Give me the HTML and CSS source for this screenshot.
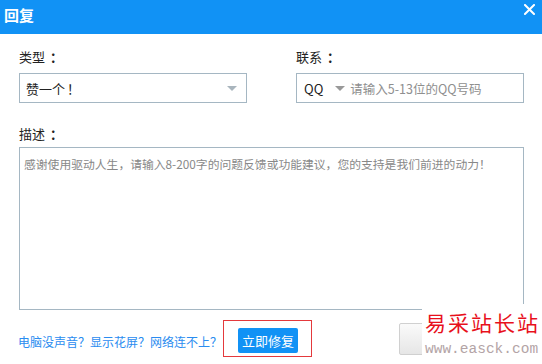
FILE: index.html
```html
<!DOCTYPE html>
<html lang="zh-CN">
<head>
<meta charset="utf-8">
<title>回复</title>
<link rel="stylesheet" href="styles.css">
</head>
<body>
<div class="dialog">
  <div class="titlebar">
    <span class="title">回复</span>
    <svg class="close" width="11" height="11" viewBox="0 0 11 11"><path d="M1 1L10 10M10 1L1 10" stroke="#fff" stroke-width="2" stroke-linecap="square"/></svg>
  </div>
  <div class="content">
    <div class="row">
      <div class="field">
        <div class="label">类型<span class="colon">：</span></div>
        <div class="box select">
          <span class="value">赞一个<span class="excl">！</span></span>
          <span class="tri tri-light"></span>
        </div>
      </div>
      <div class="field">
        <div class="label">联系<span class="colon">：</span></div>
        <div class="box contact">
          <span class="value">QQ</span>
          <span class="tri tri-gray"></span>
          <span class="ph">请输入5-13位的QQ号码</span>
        </div>
      </div>
    </div>
    <div class="label desc-label">描述<span class="colon">：</span></div>
    <div class="textarea">感谢使用驱动人生，请输入8-200字的问题反馈或功能建议，您的支持是我们前进的动力！</div>
    <div class="footer">
      <a class="links">电脑没声音？显示花屏？网络连不上？</a>
      <div class="highlight"><button class="btn-primary">立即修复</button></div>
      <span class="btn-gray"></span>
    </div>
  </div>
  <div class="watermark">
    <div class="wm-cn">易采站长站</div>
    <div class="wm-url">www.easck.com</div>
  </div>
</div>
</body>
</html>
```

FILE: styles.css
```css
* { box-sizing: border-box; }
html, body { margin: 0; padding: 0; background: #fff; }
body {
  font-family: "Noto Sans CJK SC", "Noto Sans", sans-serif;
  color: #222;
  width: 542px;
  height: 364px;
  overflow: hidden;
}
.dialog { position: relative; width: 542px; height: 364px; }
.titlebar {
  height: 34px;
  background: #1192f5;
  display: flex;
  justify-content: space-between;
  align-items: flex-start;
  padding: 0 7px 0 4px;
}
.title {
  color: #fff;
  font-size: 15px;
  font-weight: bold;
  line-height: 29px;
}
.close { margin-top: 4px; }
.content { padding: 13px 18px 0 19px; }
.row {
  display: grid;
  grid-template-columns: 228px 228px;
  column-gap: 49px;
}
.label {
  font-size: 13px;
  line-height: 20px;
  margin-bottom: 6px;
  color: #222;
}
.colon {
  font-weight: bold;
  margin-left: 5px;
}
.box {
  height: 30px;
  border: 1px solid #a5b7c3;
  display: flex;
  align-items: center;
  font-size: 13px;
}
.select { padding: 0 6px 0 6px; justify-content: space-between; }
.contact { padding: 0 7px; }
.value { color: #222; }
.excl { margin-left: 2px; }
.tri {
  width: 0; height: 0;
  border-left: 5px solid transparent;
  border-right: 5px solid transparent;
  border-top: 5px solid #a9b5bd;
}
.tri-light { margin-right: 3px; }
.tri-gray { border-top-color: #999; margin-left: 12px; margin-right: 5px; }
.ph { color: #8f8f8f; font-size: 12.5px; }
.desc-label { margin-top: 21px; margin-bottom: 3px; }
.textarea {
  height: 163px;
  border: 1px solid #a5b7c3;
  padding: 6px 4px;
  font-size: 11.8px;
  line-height: 20px;
  color: #888;
  white-space: nowrap;
}
.footer {
  display: flex;
  align-items: center;
  margin-top: 10px;
}
.links {
  color: #2a8cf0;
  font-size: 12px;
  width: 205px;
  flex: none;
  margin-left: -1px;
  margin-top: 5px;
  white-space: nowrap;
  overflow: hidden;
}
.highlight {
  flex: none;
  border: 1px solid #e4393c;
  padding: 7px 13px 3px 14px;
}
.btn-primary {
  display: block;
  width: 60px;
  height: 25px;
  border: 0;
  border-radius: 2px;
  background: #1192f5;
  color: #fff;
  font-family: inherit;
  font-size: 13px;
  padding: 0;
  line-height: 25px;
}
.btn-gray {
  flex: none;
  display: block;
  margin-left: 87px;
  margin-top: 1px;
  width: 60px;
  height: 32px;
  border: 1px solid #d0d0d0;
  border-radius: 2px;
  background: linear-gradient(#fafafa, #e6e6e6);
}
.watermark {
  position: absolute;
  left: 422px;
  top: 304px;
  width: 120px;
  height: 60px;
  background: #fff;
  padding: 7px 0 0 3px;
}
.wm-cn {
  color: #e8101c;
  font-size: 21px;
  line-height: 22px;
  letter-spacing: 2px;
  white-space: nowrap;
}
.wm-url {
  color: #b3a4a6;
  font-family: "Liberation Mono", monospace;
  font-size: 14.5px;
  line-height: 16px;
  margin-top: 8px;
  white-space: nowrap;
}
```
